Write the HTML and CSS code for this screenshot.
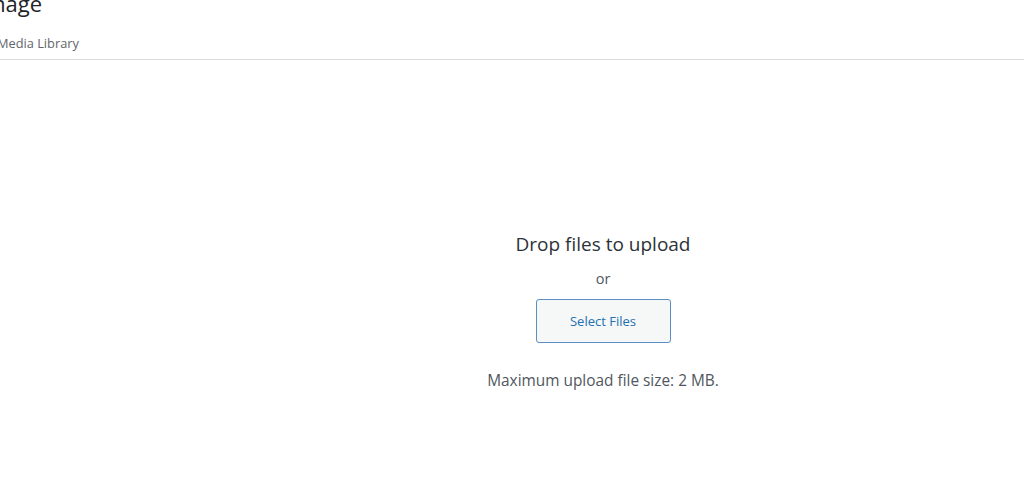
FILE: index.html
```html
<!DOCTYPE html>
<html>
<head>
<meta charset="utf-8">
<link rel="stylesheet" href="styles.css">
</head>
<body>
<div class="modal">
  <div class="head">
    <h1 class="title">Image</h1>
    <div class="tabs"><span class="tab">Media Library</span></div>
  </div>
  <div class="uploader">
    <div class="inner">
      <h2 class="drop">Drop files to upload</h2>
      <p class="or">or</p>
      <button class="select">Select Files</button>
      <p class="max">Maximum upload file size: 2 MB.</p>
    </div>
  </div>
</div>
</body>
</html>
```

FILE: styles.css
```css
html, body {
  margin: 0;
  padding: 0;
  background: #fff;
  overflow: hidden;
}
body {
  font-family: "Open Sans", "Noto Sans", sans-serif;
  color: #1d2327;
  width: 1024px;
  height: 482px;
}
.modal {
  display: flex;
  flex-direction: column;
}
.head {
  border-bottom: 1px solid #dcdcde;
  height: 60px;
  box-sizing: border-box;
}
.title {
  margin: -8px 0 0 -21px;
  font-size: 22px;
  line-height: 22px;
  font-weight: 400;
  color: #1d2327;
}
.tabs {
  margin: 19px 0 0 -3px;
  display: flex;
}
.tab {
  font-size: 12.8px;
  line-height: 20px;
  color: #5f666c;
}
.uploader {
  padding-left: 182px;
  display: flex;
  justify-content: center;
}
.inner {
  flex: 1;
  display: flex;
  flex-direction: column;
  align-items: center;
  padding-top: 171px;
}
.drop {
  margin: 0;
  font-size: 19px;
  line-height: 26px;
  font-weight: 400;
  color: #2c3338;
}
.or {
  margin: 12px 0 0;
  font-size: 14.5px;
  line-height: 20px;
  color: #50575e;
}
.select {
  margin-top: 10px;
  width: 135px;
  height: 44px;
  box-sizing: border-box;
  border: 1px solid #5b8fc4;
  border-radius: 3px;
  background: #f6f7f7;
  color: #2271b1;
  font-family: inherit;
  font-size: 13px;
  padding: 0;
}
.max {
  margin: 27px 0 0;
  font-size: 15.4px;
  line-height: 22px;
  color: #50575e;
}
```
